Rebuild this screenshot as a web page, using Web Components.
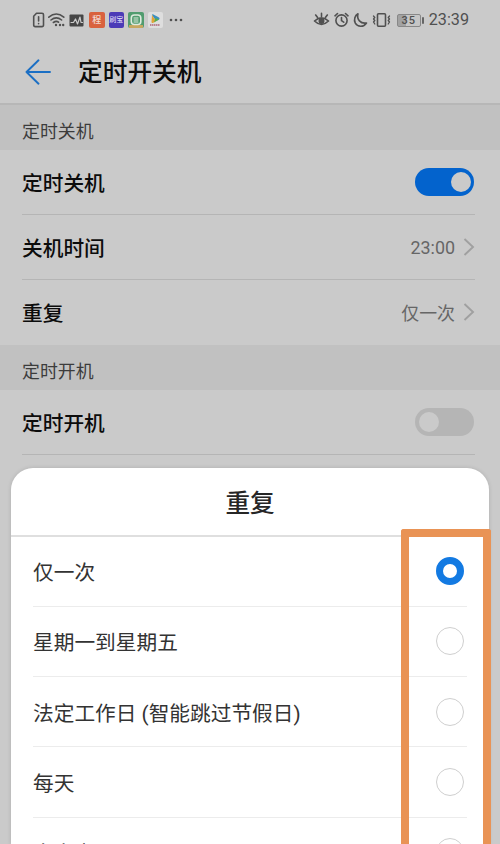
<!DOCTYPE html>
<html lang="zh-CN">
<head>
<meta charset="utf-8">
<title>定时开关机</title>
<style>
html,body{margin:0;height:844px;overflow:hidden}
body{font-family:Roboto,"Noto Sans CJK SC",sans-serif;background:#cacaca}
</style>
</head>
<body>
<power-screen></power-screen>
<script>
function define(name, html, setup) {
  const t = document.createElement('template');
  t.innerHTML = html;
  customElements.define(name, class extends HTMLElement {
    constructor() {
      super();
      this.attachShadow({mode: 'open'}).appendChild(t.content.cloneNode(true));
      if (setup) setup(this.shadowRoot);
    }
  });
}

define('app-badge', `<style>
:host{display:flex;width:15.5px;height:15.5px;border-radius:2px;align-items:center;justify-content:center;background:var(--c);color:#f1d8d0;font-size:9px;line-height:15px;font-weight:500;flex:none;overflow:hidden;white-space:nowrap}
</style><slot></slot>`);

define('status-bar', `<style>
:host{display:flex;height:40px;box-sizing:border-box;padding:0 31px 0 32px;align-items:center;color:#505050}
svg{display:block;flex:none;fill:none;stroke:#505050;stroke-width:1.6;stroke-linecap:round;stroke-linejoin:round}
.l,.r{display:flex;align-items:center}
.l{gap:4px}.r{margin-left:auto}
.t{font-size:16.2px;line-height:20px;margin-left:5px}
.b{width:22px;height:11px;border:1px solid #888;border-radius:2px;background:linear-gradient(90deg,#a2a2a2 35%,#c6c6c6 35%);font-size:11px;line-height:11.5px;text-align:center;letter-spacing:.9px;font-weight:500;margin-left:6px}
.n{width:2px;height:7px;background:#666;margin-left:1px;border-radius:1px}
</style>
<div class="l">
<svg width="13" height="16" viewBox="0 0 13 16"><path d="M4.5 1.3H10a1.5 1.5 0 0 1 1.500 1.500V13A1.500 1.500 0 0 1 10 14.600H3.200A1.500 1.500 0 0 1 1.700 13V4.300ZM6.600 4.800V9M6.600 11.600v.2"/></svg>
<svg width="17" height="16" viewBox="0 0 17 16" style="margin-left:-1px"><path d="M.8 5.200Q8.300-1.200 15.800 5.200M3 8Q8.300 3.600 13.600 8M5.400 10.500Q8.300 8.300 10.500 10.200"/><path d="M8 13v.1M12 13v.1M15.200 13v.1" stroke-width="2.400"/></svg>
<svg width="15" height="13" viewBox="0 0 15 13" style="margin-right:1px"><rect x=".5" y=".5" width="14" height="12" rx="1" fill="#454545" stroke="none"/><path d="M2 8.500h2.500L6.500 5l2 5 2.500-7 1 5.500h1.500" stroke="#ccc" stroke-width="1.200"/></svg>
<app-badge style="--c:#d9623e">程</app-badge>
<app-badge style="--c:#4b3bb7;color:#d5cff0;font-size:7px">刷宝</app-badge>
<app-badge style="--c:#519c6f"><svg width="16" height="16" viewBox="0 0 16 16"><path d="M1 13h14v3H1z" fill="#c6a760" stroke="none"/><rect x="3.300" y="3" width="9.500" height="9.500" rx="3" stroke="#dfeade" fill="#519c6f"/><path d="M6 6h4M6 8h4M6 10h4" stroke="#dfeade" stroke-width="1"/></svg></app-badge>
<app-badge style="--c:#dedede"><svg width="16" height="16" viewBox="0 0 16 16" style="stroke:none"><path d="M5 3q0-1 1-.7L12 5.500q1.300 1 0 2.200L9 9Z" fill="#3a8fc0"/><path d="M5 3l4 6-3 2q-1.500.4-1.500-1Z" fill="#e0a437"/><path d="M8.500 6l3.500 1.500L7 10.600Z" fill="#58af4b"/><path d="M3 13h10" stroke="#ad6678" stroke-width="1.300" stroke-dasharray="1.500 .5" stroke-linecap="butt"/></svg></app-badge>
<svg width="14" height="4" viewBox="0 0 14 4" style="margin-left:2px;stroke:none;fill:#505050"><circle cx="2" cy="2" r="1.300"/><circle cx="7" cy="2" r="1.300"/><circle cx="12" cy="2" r="1.300"/></svg>
</div>
<div class="r">
<svg width="17" height="16" viewBox="0 0 17 16"><path d="M1.500 9Q8.500 2.800 15.500 9 8.500 15.800 1.500 9ZM8.500 4.500V1.400M4.400 5.300 2.700 3M12.600 5.300 14.300 3"/><circle cx="8.500" cy="9" r="2.200" fill="#505050"/></svg>
<svg width="15" height="16" viewBox="0 0 15 16" style="margin-left:4px"><circle cx="7.500" cy="8.500" r="5.600"/><path d="M7.500 5.500v3.200l2.200 1.500M1 3.800 3.500 1.500M14 3.800 11.500 1.500"/></svg>
<svg width="15" height="16" viewBox="0 0 15 16" style="margin-left:4px"><path d="M5 1.800C3.500 7.500 7.500 12 13.500 11 10.500 15.600 4.500 15 2.300 11.200.5 7.500 2 3.500 5 1.800Z"/></svg>
<svg width="19" height="16" viewBox="0 0 19 16" style="margin-left:4px"><rect x="5.500" y="1.800" width="8" height="12.500" rx="1"/><path d="M1.500 4 2.800 5.500 1.500 7 2.800 8.500 1.500 10l1.300 2M17.500 4l-1.300 1.500L17.500 7l-1.300 1.500L17.500 10l-1.300 2" stroke-width="1.300"/></svg>
<div class="b">35</div><div class="n"></div><div class="t">23:39</div>
</div>`);

define('title-bar', `<style>
:host{display:flex;height:65px;box-sizing:border-box;border-bottom:2px solid #b7b7b7;padding-left:25px;align-items:center;font-size:24.7px;font-weight:500;color:#0c0c0c}
svg{margin-right:27px}span{line-height:36px;position:relative;top:1px}
</style><svg width="26" height="26" viewBox="0 0 26 26" fill="none" stroke="#1b6fc4" stroke-width="1.900" stroke-linecap="round" stroke-linejoin="round"><path d="M25 13H1.500M13.500 1.300 1.500 13l12 11.700"/></svg><span><slot></slot></span>`);

define('section-label', `<style>
:host{display:flex;height:45px;background:#c1c1c1;padding-left:22px;align-items:center;font-size:17.9px;color:#3c3c3c}
span{line-height:26px;position:relative;top:4px}
</style><span><slot></slot></span>`);

define('setting-row', `<style>
:host{display:flex;height:65px;box-sizing:border-box;margin:0 25px 0 22px;align-items:center;justify-content:space-between;border-bottom:1.5px solid #b5b5b5;color:#0c0c0c;font-size:20.7px;font-weight:500}
:host([last]){border-color:transparent}
</style><span><slot></slot></span><slot name="end"></slot>`);

define('toggle-switch', `<style>
:host{display:flex;box-sizing:border-box;width:59px;height:28px;border-radius:14px;background:#b5b5b5;padding:3.500px;align-items:center;margin-right:1px}
:host([on]){background:#0363cd;justify-content:flex-end}
i{width:20px;height:20px;border-radius:50%;background:#cacaca}
</style><i></i>`);

define('value-link', `<style>
:host{display:flex;align-items:center;font-size:17.9px;font-weight:400;color:#666}
svg{margin-left:8px}
</style><slot></slot><svg width="12" height="18" viewBox="0 0 12 18" fill="none" stroke="#a0a0a0" stroke-width="1.900"><path d="M1.500 1 10 9l-8.500 8"/></svg>`);

define('radio-option', `<style>
:host{display:flex;height:70.300px;box-sizing:border-box;margin:0 22px;padding-right:3px;align-items:center;justify-content:space-between;border-bottom:1px solid #ececec;font-size:20.700px;color:#333;flex:none}
i{box-sizing:border-box;width:28px;height:28px;border-radius:50%;border:1.600px solid #cfcfcf}
:host([checked]) i{border:7px solid #137ae2}
</style><span><slot></slot></span><i></i>`);

define('bottom-sheet', `<style>
:host{display:flex;flex-direction:column;background:#fff;border-radius:22px 22px 0 0;overflow:hidden;box-shadow:0 0 4px #0002}
header{height:69px;box-sizing:border-box;border-bottom:2px solid #dfdfdf;display:flex;align-items:center;justify-content:center;font-size:24.600px;font-weight:500;color:#262626;flex:none}
</style><header><slot name="title"></slot></header><slot></slot>`);

define('focus-frame', `<style>
:host{display:block;box-sizing:border-box;border:8px solid #e99355;border-bottom:0;border-radius:3px 3px 0 0}
</style>`);

define('power-screen', `<style>
:host{display:block;position:relative;width:500px;height:844px;overflow:hidden;background:#cacaca}
bottom-sheet{position:absolute;left:11px;top:467.500px;width:478px;height:377px}
focus-frame{position:absolute;left:400.500px;top:529px;width:90.500px;height:315px}
</style>
<status-bar></status-bar>
<title-bar>定时开关机</title-bar>
<section-label>定时关机</section-label>
<setting-row>定时关机<toggle-switch slot="end" on></toggle-switch></setting-row>
<setting-row>关机时间<value-link slot="end">23:00</value-link></setting-row>
<setting-row last>重复<value-link slot="end">仅一次</value-link></setting-row>
<section-label>定时开机</section-label>
<setting-row>定时开机<toggle-switch slot="end"></toggle-switch></setting-row>
<bottom-sheet>
<span slot="title">重复</span>
<radio-option checked>仅一次</radio-option>
<radio-option>星期一到星期五</radio-option>
<radio-option>法定工作日 (智能跳过节假日)</radio-option>
<radio-option>每天</radio-option>
<radio-option>自定义</radio-option>
</bottom-sheet>
<focus-frame></focus-frame>`);
</script>
</body>
</html>
